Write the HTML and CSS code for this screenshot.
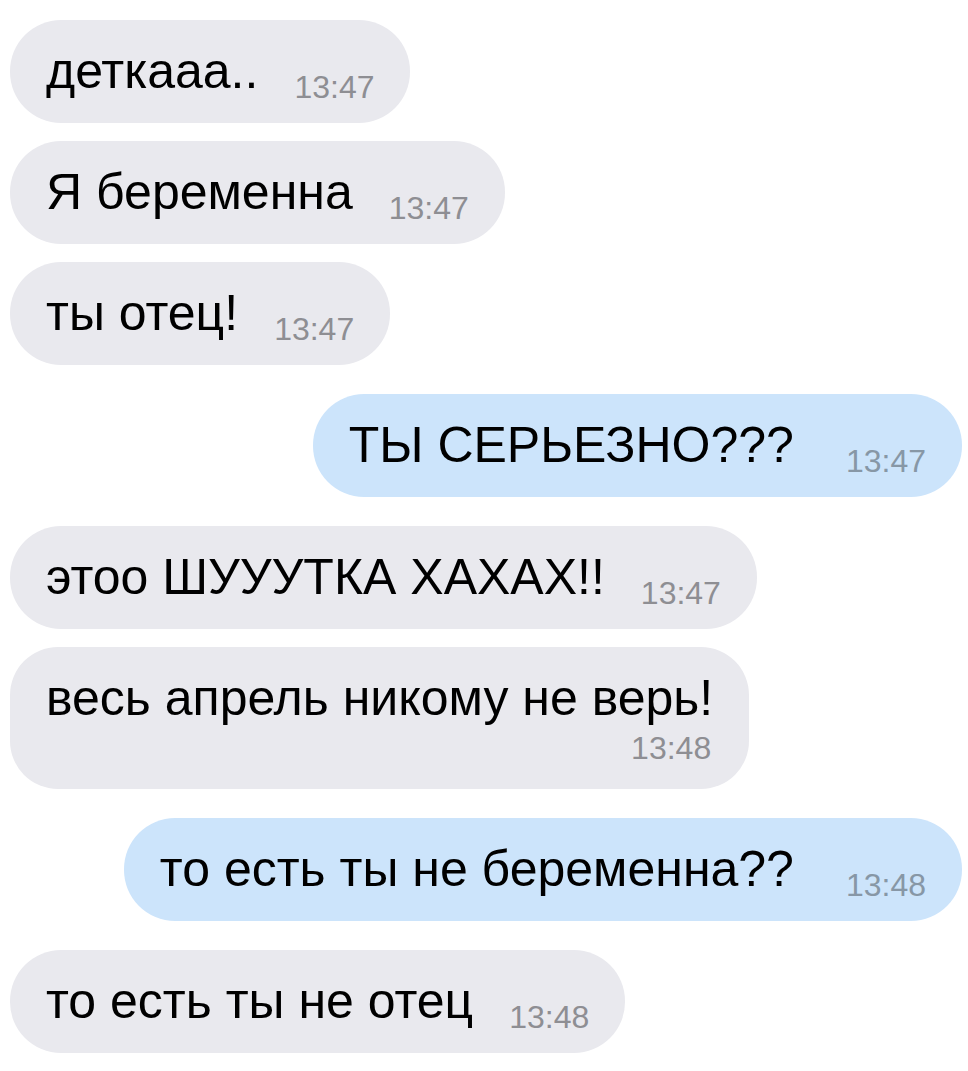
FILE: index.html
```html
<!DOCTYPE html>
<html lang="ru">
<head>
  <meta charset="UTF-8">
  <meta name="viewport" content="width=device-width, initial-scale=1.0">
  <title>Чат</title>
  <link rel="stylesheet" href="styles.css">
</head>
<body>
  <div class="chat">
    <div class="msg in">
      <span class="text">деткааа..</span><span class="time">13:47</span>
    </div>
    <div class="msg in">
      <span class="text">Я беременна</span><span class="time">13:47</span>
    </div>
    <div class="msg in">
      <span class="text">ты отец!</span><span class="time">13:47</span>
    </div>
    <div class="msg out switch">
      <span class="text">ТЫ СЕРЬЕЗНО???</span><span class="time">13:47</span>
    </div>
    <div class="msg in switch">
      <span class="text">этоо ШУУУТКА ХАХАХ!!</span><span class="time">13:47</span>
    </div>
    <div class="msg in wrap">
      <span class="text">весь апрель никому не верь!</span><span class="time">13:48</span>
    </div>
    <div class="msg out switch">
      <span class="text">то есть ты не беременна??</span><span class="time">13:48</span>
    </div>
    <div class="msg in switch">
      <span class="text">то есть ты не отец</span><span class="time">13:48</span>
    </div>
  </div>
</body>
</html>
```

FILE: styles.css
```css
body {
  margin: 0;
  padding: 0;
  background: #ffffff;
  font-family: 'Liberation Sans', Arial, sans-serif;
}

.chat {
  display: flex;
  flex-direction: column;
  gap: 18px;
  padding: 20px 6px 0 10px;
}

.msg {
  padding: 21px 36px;
  border-radius: 51px;
  font-size: 50px;
  line-height: 60px;
  white-space: nowrap;
}

.msg.in {
  align-self: flex-start;
  background-color: #e9e9ee;
}

.msg.out {
  align-self: flex-end;
  background-color: #cce4fb;
}

.msg.switch {
  margin-top: 11px;
}

.text {
  color: #000;
}

.time {
  margin-left: 36px;
  font-size: 32px;
  line-height: 30px;
  color: #8e8e93;
  vertical-align: -10px;
}

.msg.out .time {
  margin-left: 52px;
  color: #8797a6;
}

.msg.wrap {
  display: flex;
  flex-direction: column;
  padding-bottom: 21px;
  border-radius: 48px;
}

.msg.wrap .time {
  align-self: flex-end;
  margin: 0 2px 0 0;
  line-height: 40px;
  vertical-align: 0;
}
```
